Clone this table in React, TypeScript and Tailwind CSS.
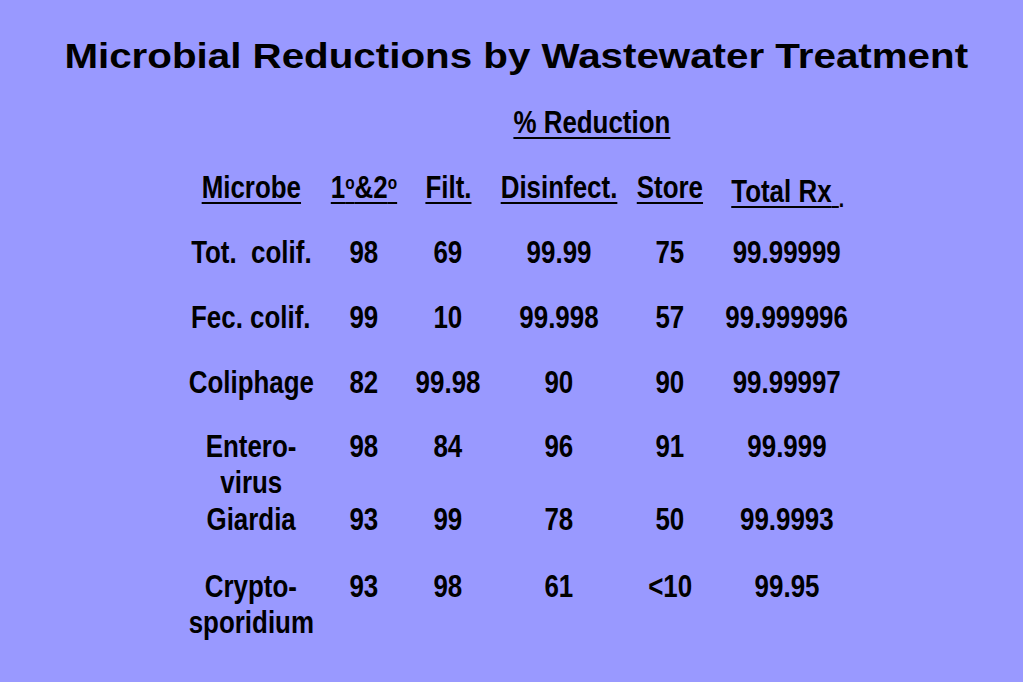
type Row = {
  name: string[];
  values: string[];
  h: string;
};

const rows: Row[] = [
  { name: ['Tot.\u00a0 colif.'], values: ['98', '69', '99.99', '75', '99.99999'], h: 'h-[65px]' },
  { name: ['Fec. colif.'], values: ['99', '10', '99.998', '57', '99.999996'], h: 'h-[65px]' },
  { name: ['Coliphage'], values: ['82', '99.98', '90', '90', '99.99997'], h: 'h-[64px]' },
  { name: ['Entero-', 'virus'], values: ['98', '84', '96', '91', '99.999'], h: 'h-[73px]' },
  { name: ['Giardia'], values: ['93', '99', '78', '50', '99.9993'], h: 'h-[67px]' },
  { name: ['Crypto-', 'sporidium'], values: ['93', '98', '61', '<10', '99.95'], h: 'h-[72px]' },
];

// the slide text is a condensed face; squeeze Liberation Sans to its width
const squeeze = 'inline-block shrink-0 scale-x-[0.81] whitespace-nowrap';
const head = 'underline decoration-2 underline-offset-[4px]';

function Cell({ children, className = '' }: { children: React.ReactNode; className?: string }) {
  return (
    <div className={`flex justify-center ${className}`}>
      <span className={squeeze}>{children}</span>
    </div>
  );
}

export default function App() {
  return (
    <div className="w-[1023px] h-[682px] bg-[#9999ff] text-black overflow-hidden [font-family:'Liberation_Sans',Arial,sans-serif]">
      <h1 className="pt-[38px] text-center text-[35px] leading-none font-bold pl-[10px]">
        <span className="inline-block scale-x-[1.152] whitespace-nowrap">
          Microbial Reductions by Wastewater Treatment
        </span>
      </h1>

      <div className="mt-[31px] ml-[181px] grid grid-cols-[140px_86px_82px_140px_82px_152px] text-[32px] leading-[36px] font-bold text-center">
        <Cell className="col-start-2 col-span-5 h-[65px]">
          <span className={head}>% Reduction</span>
        </Cell>

        <Cell className="h-[65px]"><span className={head}>Microbe</span></Cell>
        <Cell>
          <span className={head}>
            1<sup className="text-[19px] top-[-0.5em]">o</sup>&amp;2<sup className="text-[19px] top-[-0.5em]">o</sup>
          </span>
        </Cell>
        <Cell><span className={head}>Filt.</span></Cell>
        <Cell><span className={head}>Disinfect.</span></Cell>
        <Cell><span className={head}>Store</span></Cell>
        <Cell className="pt-[4px] pl-[2px]">
          <span className={head}>Total Rx{'\u00a0'}</span>
          <span className="text-[24px] leading-none align-[-5px]">.</span>
        </Cell>

        {rows.map((r) => (
          <div key={r.name[0]} className="contents">
            <div className={`flex flex-col items-center ${r.h}`}>
              {r.name.map((n) => (
                <span key={n} className={squeeze}>
                  {n}
                </span>
              ))}
            </div>
            {r.values.map((v, i) => (
              <Cell key={i} className={r.h}>
                {v}
              </Cell>
            ))}
          </div>
        ))}
      </div>
    </div>
  );
}
